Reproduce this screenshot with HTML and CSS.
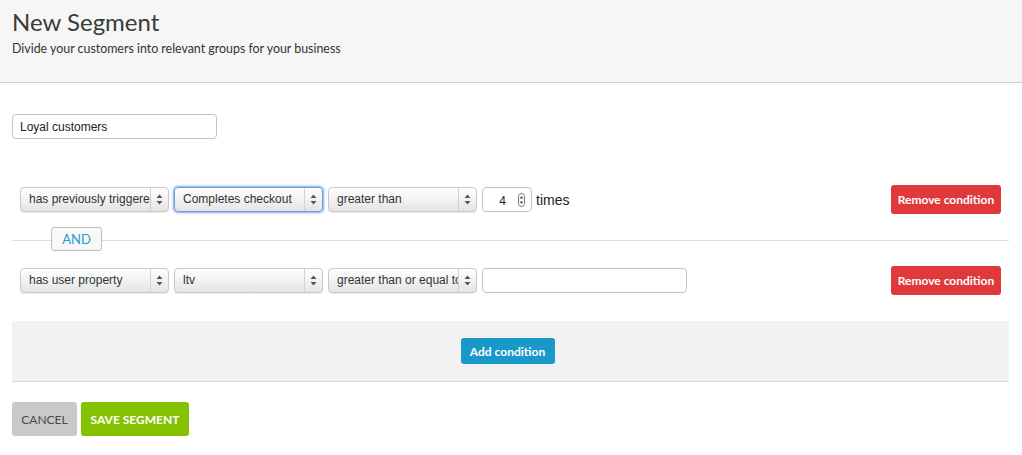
FILE: index.html
```html
<!DOCTYPE html>
<html>
<head>
<meta charset="utf-8">
<link rel="stylesheet" href="styles.css">
</head>
<body>
<header class="page-header">
  <h1 class="title">New Segment</h1>
  <p class="subtitle">Divide your customers into relevant groups for your business</p>
</header>
<main class="content">
  <div class="name-row"><input class="text-input name-input" type="text" value="Loyal customers"></div>

  <div class="cond-row">
    <div class="fields">
      <div class="select"><span class="select-text">has previously triggered</span><span class="select-arrow"><svg width="7" height="11" viewBox="0 0 7 11"><path d="M3.5 0.5L6.5 4H0.5Z M3.5 10.5L6.5 7H0.5Z" fill="#555"/></svg></span></div>
      <div class="select focused"><span class="select-text">Completes checkout</span><span class="select-arrow"><svg width="7" height="11" viewBox="0 0 7 11"><path d="M3.5 0.5L6.5 4H0.5Z M3.5 10.5L6.5 7H0.5Z" fill="#555"/></svg></span></div>
      <div class="select"><span class="select-text">greater than</span><span class="select-arrow"><svg width="7" height="11" viewBox="0 0 7 11"><path d="M3.5 0.5L6.5 4H0.5Z M3.5 10.5L6.5 7H0.5Z" fill="#555"/></svg></span></div>
      <div class="number-input"><span class="number-val">4</span><span class="spinner"><svg width="7" height="14" viewBox="0 0 7 14"><rect x="0.5" y="0.5" width="6" height="13" rx="3" fill="#fff" stroke="#777"/><path d="M3.5 3L5.3 5.6H1.7Z M3.5 11L5.3 8.4H1.7Z" fill="#444"/></svg></span></div>
      <span class="times">times</span>
    </div>
    <button class="btn btn-remove">Remove condition</button>
  </div>

  <div class="divider"><button class="and-btn">AND</button></div>

  <div class="cond-row">
    <div class="fields">
      <div class="select"><span class="select-text">has user property</span><span class="select-arrow"><svg width="7" height="11" viewBox="0 0 7 11"><path d="M3.5 0.5L6.5 4H0.5Z M3.5 10.5L6.5 7H0.5Z" fill="#555"/></svg></span></div>
      <div class="select"><span class="select-text">ltv</span><span class="select-arrow"><svg width="7" height="11" viewBox="0 0 7 11"><path d="M3.5 0.5L6.5 4H0.5Z M3.5 10.5L6.5 7H0.5Z" fill="#555"/></svg></span></div>
      <div class="select"><span class="select-text">greater than or equal to</span><span class="select-arrow"><svg width="7" height="11" viewBox="0 0 7 11"><path d="M3.5 0.5L6.5 4H0.5Z M3.5 10.5L6.5 7H0.5Z" fill="#555"/></svg></span></div>
      <input class="text-input value-input" type="text" value="">
    </div>
    <button class="btn btn-remove">Remove condition</button>
  </div>

  <div class="add-area"><button class="btn btn-add">Add condition</button></div>

  <div class="actions">
    <button class="btn btn-cancel">CANCEL</button>
    <button class="btn btn-save">SAVE SEGMENT</button>
  </div>
</main>
</body>
</html>
```

FILE: styles.css
```css
* { box-sizing: border-box; }
body {
  margin: 0;
  font-family: "Lato", "Liberation Sans", sans-serif;
  color: #333;
  background: #fff;
}
.page-header {
  background: #f5f6f5;
  border-bottom: 1px solid #cfd0cf;
  height: 83px;
  padding: 8px 12px 0;
}
.title {
  margin: 0;
  font-size: 24px;
  line-height: 28px;
  font-weight: 400;
  color: #3a3a3a;
}
.subtitle {
  margin: 5px 0 0;
  font-size: 12.4px;
  line-height: 16px;
  color: #333;
}
.content {
  padding: 31px 13px 0 12px;
}
.name-row { display: flex; }
.text-input {
  height: 25px;
  border: 1px solid #c4c4c4;
  border-radius: 4px;
  font-family: "Liberation Sans", Arial, sans-serif;
  font-size: 12px;
  color: #222;
  padding: 0 7px;
  background: #fff;
  outline: none;
}
.name-input { width: 205px; }
.cond-row {
  display: flex;
  align-items: center;
  justify-content: space-between;
  padding: 0 8px;
  height: 29px;
}
.name-row + .cond-row { margin-top: 46px; }
.fields {
  display: flex;
  align-items: center;
  gap: 5px;
}
.select {
  width: 149px;
  height: 25px;
  display: flex;
  align-items: stretch;
  border: 1px solid #c9c9c9;
  border-radius: 4px;
  background: linear-gradient(#ffffff, #f2f2f2 50%, #e4e4e4);
  box-shadow: 0 1px 1px rgba(0,0,0,0.08);
  font-family: "Liberation Sans", Arial, sans-serif;
  font-size: 12px;
  color: #333;
  overflow: hidden;
}
.select-text {
  flex: 1;
  padding-left: 8px;
  line-height: 23px;
  white-space: nowrap;
  overflow: hidden;
}
.select-arrow {
  width: 18px;
  flex: none;
  border-left: 1px solid #d2d2d2;
  display: flex;
  align-items: center;
  justify-content: center;
}
.select.focused {
  border: 1px solid #6e9fd8;
  box-shadow: 0 0 0 1px #9ec2ec, 0 0 3px 1px #9ec2ec;
}
.number-input {
  width: 50px;
  height: 25px;
  border: 1px solid #c4c4c4;
  border-radius: 4px;
  background: #fff;
  display: flex;
  align-items: center;
  font-family: "Liberation Sans", Arial, sans-serif;
  font-size: 12px;
  color: #222;
}
.number-val {
  flex: 1;
  text-align: center;
  padding-left: 4px;
  padding-top: 2px;
}
.spinner {
  display: flex;
  margin-right: 6px;
}
.times {
  font-family: "Liberation Sans", Arial, sans-serif;
  font-size: 14px;
  color: #222;
  margin-left: -1px;
}
.value-input { width: 205px; }
.btn {
  border: none;
  border-radius: 3px;
  font-family: "Lato", "Liberation Sans", sans-serif;
  font-weight: 700;
  font-size: 12px;
  cursor: pointer;
}
.btn-remove {
  width: 110px;
  height: 29px;
  background: #e0393b;
  color: #fff;
}
.divider {
  position: relative;
  height: 1px;
  background: #dedede;
  margin: 26px 0 25px;
}
.and-btn {
  position: absolute;
  left: 39px;
  top: -13px;
  width: 51px;
  height: 24px;
  border: 1px solid #b9bec0;
  border-radius: 3px;
  background: #f7f9f9;
  color: #2a98cc;
  font-family: "Lato", "Liberation Sans", sans-serif;
  font-size: 13px;
  padding: 0;
}
.add-area {
  margin-top: 26px;
  height: 61px;
  background: #f2f2f2;
  border-bottom: 1px solid #d8d8d8;
  display: flex;
  align-items: center;
  justify-content: center;
  padding-right: 6px;
}
.btn-add {
  width: 94px;
  height: 26px;
  background: #1899c9;
  color: #fff;
}
.actions {
  display: flex;
  gap: 4px;
  margin-top: 20px;
}
.btn-cancel {
  width: 65px;
  height: 34px;
  background: #c9c9c9;
  color: #4a4a4a;
  font-weight: 400;
}
.btn-save {
  width: 108px;
  height: 34px;
  background: #84c200;
  color: #fff;
}
```
